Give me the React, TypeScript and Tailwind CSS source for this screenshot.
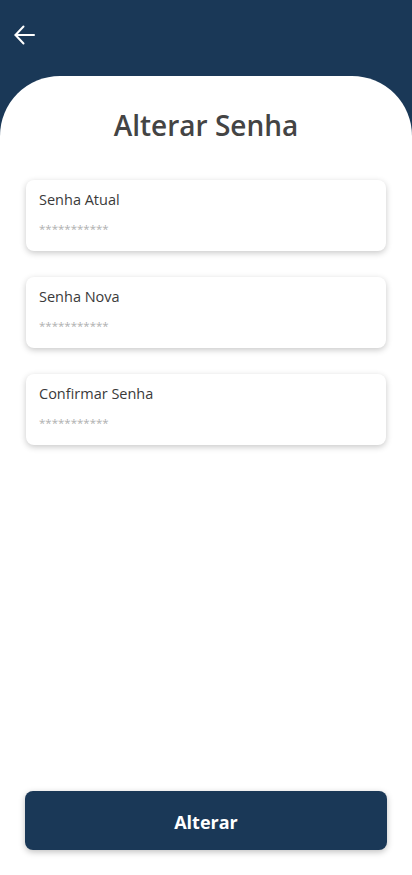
import React from "react";

function Field({ label }: { label: string }) {
  return (
    <div className="h-[71px] rounded-[8px] bg-white shadow-[0_2px_6px_rgba(0,0,0,0.22)] px-[13px] pt-[10px]">
      <div className="text-[14.5px] leading-[20px] text-[#3a3a3a]">{label}</div>
      <div className="mt-[11px] text-[11.5px] leading-[16px] text-[#b0b0b0]">***********</div>
    </div>
  );
}

export default function App() {
  return (
    <div className="h-[875px] w-[412px] bg-[#1a3857] flex flex-col" style={{ fontFamily: '"Open Sans", "Noto Sans", sans-serif' }}>
      <div className="h-[76px] shrink-0 px-[14px] pt-[25px]">
        <svg width="21" height="20" viewBox="0 0 21 20" fill="none" stroke="white" strokeWidth="2" strokeLinecap="round" strokeLinejoin="round">
          <path d="M20 10H1.5" />
          <path d="M9.5 1.5L1.5 10L9.5 18.5" />
        </svg>
      </div>
      <div className="flex-1 bg-white rounded-t-[60px] flex flex-col px-[25px] pb-[25px]">
        <h1 className="mt-[31px] text-center text-[28px] leading-[36px] font-semibold text-[#444444]">Alterar Senha</h1>
        <div className="mt-[37px] flex flex-col gap-[26px] px-[1px]">
          <Field label="Senha Atual" />
          <Field label="Senha Nova" />
          <Field label="Confirmar Senha" />
        </div>
        <div className="flex-1" />
        <button className="h-[59px] w-full rounded-[8px] bg-[#1a3857] pt-[3px] text-white text-[18px] font-bold shadow-[0_2px_6px_rgba(0,0,0,0.25)]">
          Alterar
        </button>
      </div>
    </div>
  );
}
